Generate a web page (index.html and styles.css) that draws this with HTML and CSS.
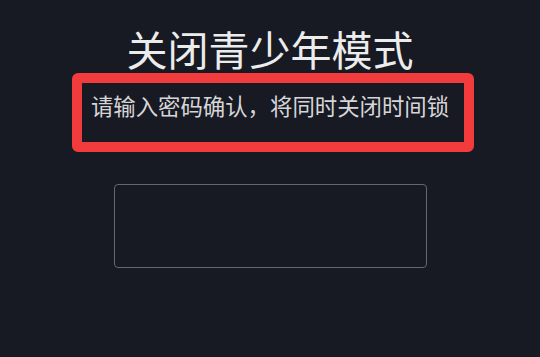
FILE: index.html
```html
<html lang="zh">
<head>
  <meta charset="UTF-8" />
  <meta name="viewport" content="width=device-width, initial-scale=1.0" />
  <title>关闭青少年模式</title>
  <link rel="stylesheet" href="styles.css">
</head>
<body>
  <div class="page">
    <h1 class="title">关闭青少年模式</h1>

    <!-- 提示文字 + 红框标注 -->
    <div class="highlight">
      <p class="subtitle">请输入密码确认，将同时关闭时间锁</p>
    </div>

    <div class="code-box"></div>
  </div>
</body>
</html>
```

FILE: styles.css
```css
* {
  margin: 0;
  padding: 0;
  box-sizing: border-box;
}

body {
  background-color: #171923;
  font-family: "Noto Sans CJK SC", "Noto Sans", sans-serif;
  height: 100vh;
  overflow: hidden;
}

.page {
  display: flex;
  flex-direction: column;
  align-items: center;
  padding-top: 24px;
}

.title {
  font-size: 41px;
  font-weight: normal;
  line-height: 49px;
  color: #ececec;
}

.highlight {
  width: 402px;
  height: 79px;
  margin-left: 6px;
  border: 10px solid #f23b3c;
  border-radius: 6px;
  padding-top: 7px;
  display: flex;
  justify-content: center;
}

.subtitle {
  font-size: 22.4px;
  line-height: 30px;
  white-space: nowrap;
  color: #d6d6d8;
  margin-left: -6px;
}

.code-box {
  width: 313px;
  height: 84px;
  margin-top: 32px;
  border: 1.5px solid #64676f;
  border-radius: 4px;
}
```
